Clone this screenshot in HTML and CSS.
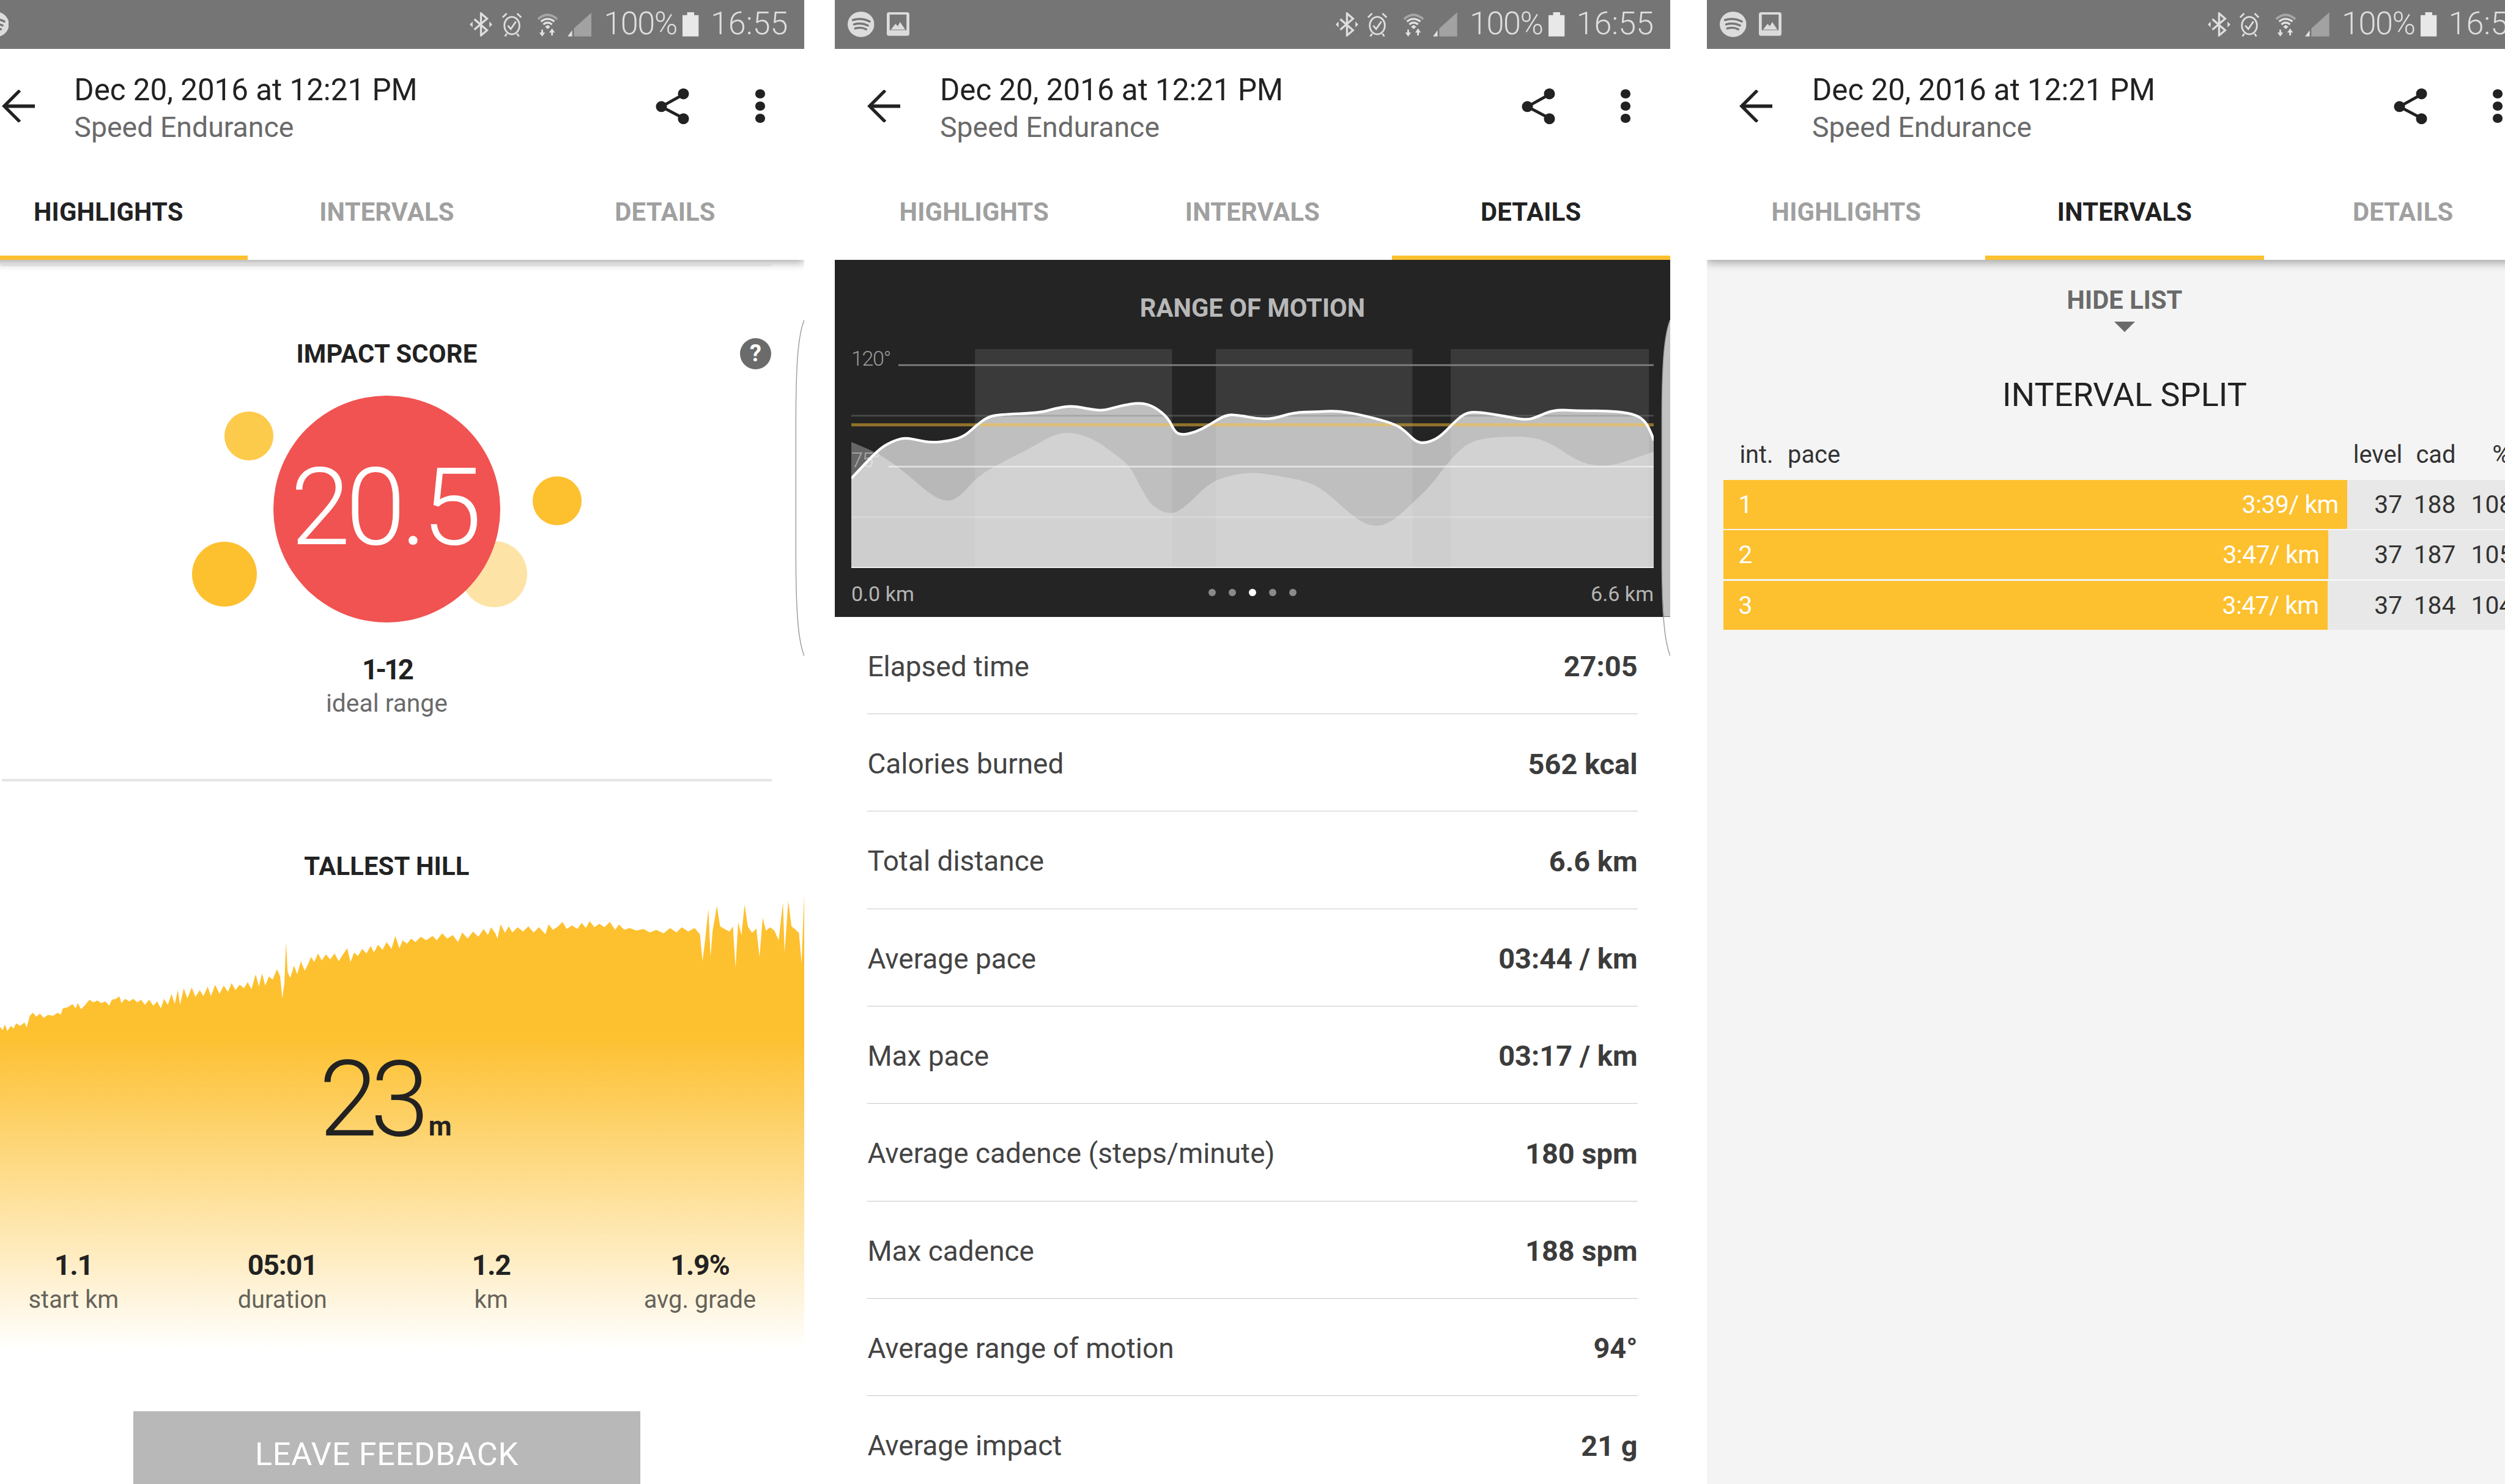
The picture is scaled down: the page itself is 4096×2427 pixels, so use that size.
FILE: index.html
```html
<!DOCTYPE html>
<html lang="en">
<head>
<meta charset="utf-8">
<title>Workout summary</title>
<link rel="stylesheet" href="styles.css">
</head>
<body>
<svg class="defs" aria-hidden="true">
  <symbol id="i-spotify" viewBox="0 0 46 44">
    <ellipse cx="23" cy="22" rx="23" ry="22" fill="#dcdcdc"/>
    <path d="M9 14.5Q24 10 38 17M11 22Q24 18.500 35 24M13 29Q24 26 32 30.500" fill="none" stroke="#757575" stroke-width="3.600" stroke-linecap="round"/>
  </symbol>
  <symbol id="i-image" viewBox="0 0 39 41">
    <rect width="39" height="41" rx="4" fill="#dcdcdc"/>
    <rect x="5" y="4" width="29" height="27" fill="#757575"/>
    <path d="M7 30L15 20L19 24L23 17L32 30Z" fill="#dcdcdc"/>
  </symbol>
  <symbol id="i-bt" viewBox="0 0 39 42">
    <path d="M8 12L30 31L19.500 40V2L30 11L8 30" fill="none" stroke="#dedede" stroke-width="3.500"/>
    <path d="M0 21L5 16V26ZM39 21L34 16V26Z" fill="#dedede"/>
  </symbol>
  <symbol id="i-alarm" viewBox="0 0 36 42">
    <ellipse cx="18" cy="23" rx="13" ry="15" fill="none" stroke="#dedede" stroke-width="3"/>
    <path d="M11 23L16 29L25 16" fill="none" stroke="#dedede" stroke-width="3"/>
    <path d="M2 9L9 2M34 9L27 2M9 37L6 42M27 37L30 42" fill="none" stroke="#dedede" stroke-width="3"/>
  </symbol>
  <symbol id="i-wifi" viewBox="0 0 37 42">
    <path d="M2 12Q18 -3 35 12" fill="none" stroke="#a6a6a6" stroke-width="4"/>
    <path d="M7 16Q18 7 30 16M11 21Q18 15 26 21" fill="none" stroke="#e2e2e2" stroke-width="3.500"/>
    <path d="M14 25L18.500 22L23 25L18.500 29Z" fill="#e2e2e2"/>
    <path d="M9 30V40M26 40V30" fill="none" stroke="#e2e2e2" stroke-width="3"/>
    <path d="M4 35H14L9 42ZM21 35H31L26 28Z" fill="#e2e2e2"/>
  </symbol>
  <symbol id="i-signal" viewBox="0 0 42 42">
    <path d="M42 0V42H11V28Z" fill="#a2a2a2"/>
    <path d="M0 42L8 31V42Z" fill="#e2e2e2"/>
  </symbol>
  <symbol id="i-battery" viewBox="0 0 28 42">
    <path d="M8 0H20V5H28V42H0V5H8Z" fill="#e8e8e8"/>
  </symbol>
  <symbol id="i-back" viewBox="0 0 57 56">
    <path d="M57 28H6" fill="none" stroke="#222" stroke-width="6"/>
    <path d="M31 1L4 28L31 55" fill="none" stroke="#222" stroke-width="5.500"/>
  </symbol>
  <symbol id="i-share" viewBox="0 0 58 63">
    <path d="M48 11L10 32L48 52" fill="none" stroke="#222" stroke-width="5"/>
    <circle cx="48" cy="10" r="9.500" fill="#222"/>
    <circle cx="10" cy="32" r="9.500" fill="#222"/>
    <circle cx="48" cy="53" r="9.500" fill="#222"/>
  </symbol>
</svg>

<main class="screens">

  <section class="phone phone-first">
    <header class="head head-shadow">
      <div class="status">
        <svg class="ic-spotify"><use href="#i-spotify"/></svg>
        <div class="status-right">
          <svg class="ic-bt"><use href="#i-bt"/></svg>
          <svg class="ic-alarm"><use href="#i-alarm"/></svg>
          <svg class="ic-wifi"><use href="#i-wifi"/></svg>
          <svg class="ic-signal"><use href="#i-signal"/></svg>
          <span class="pct">100%</span>
          <svg class="ic-battery"><use href="#i-battery"/></svg>
          <span class="clock">16:55</span>
        </div>
      </div>
      <div class="appbar">
        <svg class="ic-back"><use href="#i-back"/></svg>
        <div class="titles">
          <div class="title">Dec 20, 2016 at 12:21 PM</div>
          <div class="subtitle">Speed Endurance</div>
        </div>
        <svg class="ic-share"><use href="#i-share"/></svg>
        <div class="kebab"><i></i><i></i><i></i></div>
      </div>
      <nav class="tabs">
        <div class="tab active">HIGHLIGHTS</div>
        <div class="tab">INTERVALS</div>
        <div class="tab">DETAILS</div>
      </nav>
    </header>

    <div class="tab-line"></div>

    <section class="impact">
      <h2 class="heading">IMPACT SCORE</h2>
      <div class="help">?</div>
      <div class="bubbles">
        <span class="bubble b1"></span>
        <span class="bubble b2"></span>
        <span class="bubble b3"></span>
        <span class="bubble b4"></span>
        <div class="score">20.5</div>
      </div>
      <div class="range">1-12</div>
      <div class="range-label">ideal range</div>
    </section>
    <div class="divider"></div>

    <section class="hill">
      <svg class="hill-chart" viewBox="0 0 1510 1270" preserveAspectRatio="none" aria-hidden="true">
        <defs>
          <linearGradient id="hillfade" gradientUnits="userSpaceOnUse" x1="0" y1="540" x2="0" y2="1260">
            <stop offset="0" stop-color="#fdc02f"/>
            <stop offset="1" stop-color="#fdc02f" stop-opacity="0"/>
          </linearGradient>
        </defs>
        <path fill="url(#hillfade)" d="M0 520L5 528 9 515 14 530 20 518 26 524 30 512 38 518 46 510 50 522 56 495 62 488 68 497 75 490 82 500 90 493 100 495 108 488 114 492 118 478 128 475 136 468 142 478 146 466 152 480 160 470 168 458 175 464 183 460 190 466 198 462 205 472 210 458 218 456 224 450 228 466 235 456 243 462 250 456 258 464 265 458 272 470 280 458 288 472 295 462 302 478 308 456 315 470 322 445 328 468 334 436 338 470 345 432 352 455 360 430 367 452 375 436 382 450 390 428 396 450 404 424 412 445 420 426 428 440 435 420 442 436 450 424 458 432 465 418 472 434 480 400 486 428 492 398 498 426 505 405 512 412 520 388 526 405 530 455 534 420 537 325 540 395 545 408 552 380 558 400 565 370 572 392 578 378 584 360 590 372 597 352 604 368 612 354 620 366 628 352 636 370 644 354 652 340 658 372 665 350 672 358 680 342 688 352 696 335 702 350 710 332 718 344 726 326 735 342 742 312 750 340 756 322 764 330 772 318 780 326 790 314 800 322 812 312 820 322 830 306 840 318 850 310 860 326 868 304 878 318 888 302 898 314 908 296 916 310 922 292 930 306 934 318 940 285 948 305 955 290 962 304 972 292 982 302 992 290 1002 304 1012 292 1024 308 1030 285 1038 298 1048 290 1056 280 1064 296 1074 288 1084 296 1092 282 1100 294 1107 278 1116 292 1125 284 1135 292 1145 280 1155 298 1162 286 1172 298 1182 294 1195 300 1208 296 1220 304 1232 298 1246 306 1258 294 1270 304 1280 292 1292 302 1304 294 1314 308 1319 370 1324 320 1330 250 1334 360 1338 300 1346 243 1352 290 1360 296 1370 302 1376 290 1381 385 1386 280 1392 310 1398 240 1404 290 1412 305 1420 295 1426 360 1432 270 1438 300 1446 292 1454 300 1462 322 1470 235 1473 350 1480 232 1486 290 1494 298 1500 305 1505 375 1510 213V1270H0Z"/>
      </svg>
      <div class="hill-content">
        <h2 class="heading">TALLEST HILL</h2>
        <div class="hill-value"><span class="hill-num">23</span><span class="hill-unit">m</span></div>
        <div class="stats">
          <div class="stat"><div class="stat-val">1.1</div><div class="stat-lab">start km</div></div>
          <div class="stat"><div class="stat-val">05:01</div><div class="stat-lab">duration</div></div>
          <div class="stat"><div class="stat-val">1.2</div><div class="stat-lab">km</div></div>
          <div class="stat"><div class="stat-val">1.9%</div><div class="stat-lab">avg. grade</div></div>
        </div>
        <div class="feedback">LEAVE FEEDBACK</div>
      </div>
    </section>

    <svg class="edge" viewBox="0 0 17 580" preserveAspectRatio="none" aria-hidden="true">
      <path d="M17 0C7 25 3 70 2.500 160V420C3 510 7 555 17 580" fill="none" stroke="#9c9c9c" stroke-width="1.500"/>
    </svg>
  </section>

  <section class="phone phone-second">
    <header class="head">
      <div class="status">
        <svg class="ic-spotify"><use href="#i-spotify"/></svg>
        <svg class="ic-image"><use href="#i-image"/></svg>
        <div class="status-right">
          <svg class="ic-bt"><use href="#i-bt"/></svg>
          <svg class="ic-alarm"><use href="#i-alarm"/></svg>
          <svg class="ic-wifi"><use href="#i-wifi"/></svg>
          <svg class="ic-signal"><use href="#i-signal"/></svg>
          <span class="pct">100%</span>
          <svg class="ic-battery"><use href="#i-battery"/></svg>
          <span class="clock">16:55</span>
        </div>
      </div>
      <div class="appbar">
        <svg class="ic-back"><use href="#i-back"/></svg>
        <div class="titles">
          <div class="title">Dec 20, 2016 at 12:21 PM</div>
          <div class="subtitle">Speed Endurance</div>
        </div>
        <svg class="ic-share"><use href="#i-share"/></svg>
        <div class="kebab"><i></i><i></i><i></i></div>
      </div>
      <nav class="tabs">
        <div class="tab">HIGHLIGHTS</div>
        <div class="tab">INTERVALS</div>
        <div class="tab active">DETAILS</div>
      </nav>
    </header>

    <section class="rom">
      <h2 class="rom-title">RANGE OF MOTION</h2>
      <div class="rom-chart">
        <svg class="rom-svg" viewBox="51 355 1466 780" preserveAspectRatio="none" aria-hidden="true">
          <rect class="band" x="277" y="355" width="360" height="780"/>
          <rect class="band" x="717" y="355" width="359" height="780"/>
          <rect class="band" x="1146" y="355" width="362" height="780"/>
          <path class="area-two" d="M51 685L78 707.500Q105 730 127.500 762.500Q150 795 175 837.500Q200 880 215 890Q230 900 242.500 885Q255 870 267.500 840Q280 810 300 787.500Q320 765 350 735Q380 705 400 682.500Q420 660 435 655Q450 650 470 660Q490 670 510 697.500Q530 725 545 747.500Q560 770 570 810Q580 850 590 882.500Q600 915 617.500 931Q635 947 650 928.500Q665 910 682.500 875Q700 840 715 825Q730 810 755 801Q780 792 805 798.500Q830 805 855 815Q880 825 895 837.500Q910 850 930 885Q950 920 967.500 947.500Q985 975 1000 981.500Q1015 988 1030 974Q1045 960 1060 932.500Q1075 905 1092.500 872.500Q1110 840 1125 800Q1140 760 1157.500 725Q1175 690 1195 679Q1215 668 1252.500 666.500Q1290 665 1310 677.500Q1330 690 1350 717.500Q1370 745 1387.500 757.500Q1405 770 1422.500 770Q1440 770 1460 757.500Q1480 745 1517 720V1135H51Z"/>
          <path class="area-one" d="M51 815Q75 765 90 735Q105 705 117.500 692.500Q130 680 140 675Q150 670 162.500 675Q175 680 186 684Q197 688 213.500 685Q230 682 244 673.500Q258 665 269 645Q280 625 290 611Q300 597 310 592.500Q320 588 357.500 585Q395 582 410 573.500Q425 565 440 560.500Q455 556 472.500 563Q490 570 501 572Q512 574 528.500 564.500Q545 555 562.500 550Q580 545 592.500 552.500Q605 560 617.500 580Q630 600 636 625Q642 650 648.500 655.500Q655 661 667.500 655.500Q680 650 692.500 637.500Q705 625 720 606.500Q735 588 747.500 589Q760 590 775 596Q790 602 805 603Q820 604 840 592Q860 580 880 579Q900 578 920 576Q940 574 965 583Q990 592 1017.500 607Q1045 622 1055 636Q1065 650 1073.500 667.500Q1082 685 1091 687.500Q1100 690 1112.500 680Q1125 670 1137.500 645Q1150 620 1160 602.500Q1170 585 1180 581Q1190 577 1215 584.500Q1240 592 1262.500 600Q1285 608 1295 601.500Q1305 595 1320 582.500Q1335 570 1357.500 572.500Q1380 575 1405 574.500Q1430 574 1450 578Q1470 582 1482.500 590Q1495 598 1502.500 619Q1510 640 1517 680V1135H51Z"/>
          <path class="ln ln-top" d="M137 412H1517"/>
          <path class="ln ln-faint" d="M51 592H1517"/>
          <path class="ln-yellow" d="M51 619H1517V630H51Z"/>
          <path class="ln ln-mid" d="M119 773H1517"/>
          <path class="ln ln-low" d="M51 953H1517"/>
          <path class="ln ln-base" d="M51 1133H1517"/>
          <path class="curve" d="M51 815Q75 765 90 735Q105 705 117.500 692.500Q130 680 140 675Q150 670 162.500 675Q175 680 186 684Q197 688 213.500 685Q230 682 244 673.500Q258 665 269 645Q280 625 290 611Q300 597 310 592.500Q320 588 357.500 585Q395 582 410 573.500Q425 565 440 560.500Q455 556 472.500 563Q490 570 501 572Q512 574 528.500 564.500Q545 555 562.500 550Q580 545 592.500 552.500Q605 560 617.500 580Q630 600 636 625Q642 650 648.500 655.500Q655 661 667.500 655.500Q680 650 692.500 637.500Q705 625 720 606.500Q735 588 747.500 589Q760 590 775 596Q790 602 805 603Q820 604 840 592Q860 580 880 579Q900 578 920 576Q940 574 965 583Q990 592 1017.500 607Q1045 622 1055 636Q1065 650 1073.500 667.500Q1082 685 1091 687.500Q1100 690 1112.500 680Q1125 670 1137.500 645Q1150 620 1160 602.500Q1170 585 1180 581Q1190 577 1215 584.500Q1240 592 1262.500 600Q1285 608 1295 601.500Q1305 595 1320 582.500Q1335 570 1357.500 572.500Q1380 575 1405 574.500Q1430 574 1450 578Q1470 582 1482.500 590Q1495 598 1502.500 619Q1510 640 1517 680"/>
        </svg>
        <span class="rom-label rom-120">120°</span>
        <span class="rom-label rom-75">75°</span>
      </div>
      <div class="rom-foot">
        <span>0.0 km</span>
        <div class="pager"><i></i><i></i><i class="on"></i><i></i><i></i></div>
        <span>6.6 km</span>
      </div>
    </section>

    <section class="details">
      <div class="row"><span class="row-l">Elapsed time</span><span class="row-v">27:05</span></div>
      <div class="row"><span class="row-l">Calories burned</span><span class="row-v">562 kcal</span></div>
      <div class="row"><span class="row-l">Total distance</span><span class="row-v">6.6 km</span></div>
      <div class="row"><span class="row-l">Average pace</span><span class="row-v">03:44 / km</span></div>
      <div class="row"><span class="row-l">Max pace</span><span class="row-v">03:17 / km</span></div>
      <div class="row"><span class="row-l">Average cadence (steps/minute)</span><span class="row-v">180 spm</span></div>
      <div class="row"><span class="row-l">Max cadence</span><span class="row-v">188 spm</span></div>
      <div class="row"><span class="row-l">Average range of motion</span><span class="row-v">94°</span></div>
      <div class="row"><span class="row-l">Average impact</span><span class="row-v">21 g</span></div>
    </section>

    <svg class="edge" viewBox="0 0 17 580" preserveAspectRatio="none" aria-hidden="true">
      <path d="M17 0C7 25 3 70 2.500 160V420C3 470 5 495 6 512H17Z" fill="#c2c2c2"/>
      <path d="M17 0C7 25 3 70 2.500 160V420C3 510 7 555 17 580" fill="none" stroke="#9c9c9c" stroke-width="1.500"/>
    </svg>
  </section>

  <section class="phone phone-third">
    <header class="head head-shadow">
      <div class="status">
        <svg class="ic-spotify"><use href="#i-spotify"/></svg>
        <svg class="ic-image"><use href="#i-image"/></svg>
        <div class="status-right">
          <svg class="ic-bt"><use href="#i-bt"/></svg>
          <svg class="ic-alarm"><use href="#i-alarm"/></svg>
          <svg class="ic-wifi"><use href="#i-wifi"/></svg>
          <svg class="ic-signal"><use href="#i-signal"/></svg>
          <span class="pct">100%</span>
          <svg class="ic-battery"><use href="#i-battery"/></svg>
          <span class="clock">16:55</span>
        </div>
      </div>
      <div class="appbar">
        <svg class="ic-back"><use href="#i-back"/></svg>
        <div class="titles">
          <div class="title">Dec 20, 2016 at 12:21 PM</div>
          <div class="subtitle">Speed Endurance</div>
        </div>
        <svg class="ic-share"><use href="#i-share"/></svg>
        <div class="kebab"><i></i><i></i><i></i></div>
      </div>
      <nav class="tabs">
        <div class="tab">HIGHLIGHTS</div>
        <div class="tab active">INTERVALS</div>
        <div class="tab">DETAILS</div>
      </nav>
    </header>

    <section class="intervals">
      <div class="hide-list">HIDE LIST</div>
      <div class="hide-arrow"></div>
      <h2 class="split-title">INTERVAL SPLIT</h2>
      <div class="split-head">
        <span class="col-int">int.</span>
        <span class="col-pace">pace</span>
        <span class="col-num col-lvl">level</span>
        <span class="col-num col-cad">cad</span>
        <span class="col-num col-pct col-pct-head">%</span>
      </div>
      <div class="split-rows">
        <div class="split-row">
          <div class="split-bar" style="width:1076px"><span>1</span><span>3:39/ km</span></div>
          <span class="col-num col-lvl">37</span><span class="col-num col-cad">188</span><span class="col-num col-pct">108</span>
        </div>
        <div class="split-row">
          <div class="split-bar" style="width:1043px"><span>2</span><span>3:47/ km</span></div>
          <span class="col-num col-lvl">37</span><span class="col-num col-cad">187</span><span class="col-num col-pct">105</span>
        </div>
        <div class="split-row">
          <div class="split-bar" style="width:1042px"><span>3</span><span>3:47/ km</span></div>
          <span class="col-num col-lvl">37</span><span class="col-num col-cad">184</span><span class="col-num col-pct">104</span>
        </div>
      </div>
    </section>
  </section>

</main>
</body>
</html>
```

FILE: styles.css
```css
* { box-sizing: border-box; }
html, body { margin: 0; padding: 0; background: #fff; overflow: hidden; }
body { font-family: Roboto, "Liberation Sans", sans-serif; color: #222; }
h2 { margin: 0; font: inherit; }
.defs { position: absolute; width: 0; height: 0; }

.screens { zoom: 0.948148; display: flex; width: 4320px; height: 2560px; overflow: hidden; background: #fff; }
.phone { position: relative; flex: 0 0 1440px; width: 1440px; height: 2560px; overflow: hidden; display: flex; flex-direction: column; background: #fff; }
.phone-first { margin-left: -53px; }
.phone-second { margin-left: 53px; }
.phone-third { margin-left: 64px; background: #f4f4f4; }

/* status bar */
.head { position: relative; z-index: 2; flex: 0 0 448px; background: #fff; }
.head-shadow { box-shadow: 0 5px 14px rgba(0,0,0,.32); }
.status { height: 84px; background: #757575; display: flex; align-items: center; padding: 0 28px 0 22px; }
.status-right { margin-left: auto; display: flex; align-items: center; }
.ic-spotify { width: 46px; height: 44px; }
.ic-image { width: 39px; height: 41px; margin-left: 21px; }
.ic-bt { width: 39px; height: 42px; margin-right: 15px; }
.ic-alarm { width: 36px; height: 42px; margin-right: 26px; }
.ic-wifi { width: 37px; height: 42px; margin-right: 15px; }
.ic-signal { width: 42px; height: 42px; margin-right: 21px; }
.ic-battery { width: 28px; height: 42px; margin: 0 20px 0 10px; }
.pct, .clock { font-size: 55px; line-height: 60px; font-weight: 300; color: #dedede; }
.pct { letter-spacing: -1.500px; }

/* app bar */
.appbar { height: 198px; display: flex; align-items: center; padding: 0 68px 0 56px; }
.ic-back { width: 57px; height: 56px; margin-right: 68px; }
.titles { padding-top: 10px; }
.title { font-size: 52px; line-height: 64px; color: #222; }
.subtitle { font-size: 49px; line-height: 66px; color: #6a6a6a; }
.ic-share { width: 58px; height: 63px; margin-left: auto; margin-right: 113px; }
.kebab { display: flex; flex-direction: column; gap: 6px; }
.kebab i { display: block; width: 17px; height: 15px; border-radius: 50%; background: #222; }

/* tabs */
.tabs { height: 166px; display: flex; }
.tab { position: relative; flex: 1; display: flex; align-items: center; justify-content: center; font-size: 44px; font-weight: 700; color: #a0a0a0; letter-spacing: .2px; }
.tab.active { color: #222; }
.tab.active::after { content: ""; position: absolute; left: 0; right: 0; bottom: 0; height: 7px; background: #fdc02f; }
.tab-line { position: absolute; z-index: 3; left: 56px; width: 1328px; top: 455px; height: 4px; background: #dcdcdc; }

/* impact */
.impact { position: relative; flex: none; display: flex; flex-direction: column; align-items: center; padding-top: 137px; height: 896px; }
.heading { font-size: 44px; line-height: 50px; font-weight: 700; color: #222; text-align: center; letter-spacing: .2px; }
.help { position: absolute; top: 135px; left: 1329px; width: 54px; height: 54px; border-radius: 50%; background: #6b6b6b; color: #fff; font-size: 40px; font-weight: 700; line-height: 54px; text-align: center; }
.bubbles { position: relative; width: 392px; height: 392px; margin-top: 47px; }
.bubble { position: absolute; border-radius: 50%; background: #fdc02f; }
.b1 { width: 84px; height: 84px; left: -84px; top: 28px; background: #fdcb4b; }
.b2 { width: 84px; height: 84px; left: 448px; top: 140px; }
.b3 { width: 112px; height: 112px; left: -140px; top: 252px; }
.b4 { width: 114px; height: 114px; left: 324px; top: 251px; background: #fde3a6; }
.score { position: absolute; inset: 0; border-radius: 50%; background: #f05351; color: #fff; font-size: 186px; font-weight: 300; letter-spacing: -8px; line-height: 386px; text-align: center; text-indent: -10px; }
.range { margin-top: 54px; font-size: 48px; line-height: 56px; font-weight: 700; letter-spacing: -4px; color: #222; }
.range-label { margin-top: 5px; font-size: 43px; line-height: 50px; color: #6a6a6a; }
.divider { flex: 0 0 4px; margin: 0 56px; background: #e5e5e5; }

/* hill */
.hill { position: relative; flex: none; }
.hill-chart { position: absolute; left: 53px; top: 32px; width: 1387px; height: 956px; }
.hill-content { position: relative; display: flex; flex-direction: column; align-items: center; padding-top: 121px; }
.hill-value { margin-top: 286px; display: flex; align-items: baseline; height: 183px; }
.hill-num { font-size: 183px; line-height: 183px; font-weight: 300; letter-spacing: -13px; color: #222; margin-left: -5px; }
.hill-unit { font-size: 46px; font-weight: 700; color: #222; margin-left: 12px; }
.stats { display: flex; width: 1440px; margin-top: 167px; }
.stat { flex: 1; text-align: center; }
.stat-val { font-size: 49px; line-height: 56px; font-weight: 700; color: #222; letter-spacing: -1.200px; }
.stat-lab { margin-top: 6px; font-size: 42px; line-height: 50px; color: #66635a; }
.feedback { width: 875px; height: 160px; margin-top: 167px; background: #b8b8b8; color: #fff; font-size: 55px; font-weight: 400; letter-spacing: .8px; text-align: center; line-height: 150px; }

/* edge */
.edge { position: absolute; z-index: 4; right: 0; top: 552px; width: 17px; height: 580px; }

/* range of motion */
.rom { flex: 0 0 616px; background: #242424; padding: 58px 28px 0; display: flex; flex-direction: column; }
.rom-title { font-size: 44px; line-height: 50px; font-weight: 700; color: #b8b8b8; text-align: center; }
.rom-chart { position: relative; margin-top: 46px; height: 378px; }
.rom-svg { display: block; width: 1384px; height: 378px; }
.band { fill: rgba(255,255,255,.1); }
.area-two { fill: rgba(255,255,255,.3); }
.area-one { fill: rgba(255,255,255,.68); }
.ln { fill: none; stroke-width: 3px; vector-effect: non-scaling-stroke; }
.ln-top { stroke: #808080; }
.ln-faint { stroke: rgba(130,130,130,.4); }
.ln-yellow { fill: rgba(253,192,47,.5); }
.ln-mid { stroke: rgba(240,240,240,.75); }
.ln-low { stroke: rgba(255,255,255,.2); }
.ln-base { stroke: #eee; }
.curve { fill: none; stroke: #fff; stroke-width: 4.500px; vector-effect: non-scaling-stroke; }
.rom-label { position: absolute; left: 0; font-size: 36px; line-height: 44px; font-weight: 300; letter-spacing: -1.500px; }
.rom-120 { top: -5px; color: #9a9a9a; }
.rom-75 { top: 170px; color: rgba(255,255,255,.45); }
.rom-foot { margin-top: 23px; display: flex; justify-content: space-between; align-items: center; font-size: 36px; line-height: 44px; color: #b4b4b4; }
.pager { display: flex; gap: 22px; margin-bottom: 6px; }
.pager i { display: block; width: 13px; height: 13px; border-radius: 50%; background: #8a8a8a; }
.pager i.on { background: #fff; }

/* details */
.details { flex: 1; padding: 0 56px; }
.row { height: 168px; padding-top: 4px; display: flex; justify-content: space-between; align-items: center; border-bottom: 2px solid #c8c8c8; font-size: 48.500px; color: #444; }
.row-v { font-size: 49.500px; font-weight: 700; color: #3c3c3c; }

/* intervals */
.intervals { flex: 1; background: #f4f4f4; padding-top: 45px; display: flex; flex-direction: column; align-items: center; }
.hide-list { font-size: 44px; line-height: 50px; font-weight: 700; color: #6a6a6a; }
.hide-arrow { margin-top: 12px; width: 0; height: 0; border-left: 18px solid transparent; border-right: 18px solid transparent; border-top: 18px solid #6a6a6a; }
.split-title { margin-top: 77px; font-size: 57px; line-height: 64px; color: #222; }
.split-head { align-self: stretch; display: flex; margin: 45px 28px 19px; font-size: 42px; line-height: 50px; color: #333; padding-right: 22px; }
.col-int { width: 111px; padding-left: 28px; }
.col-pace { flex: 1; }
.col-num { text-align: right; flex: none; }
.col-lvl { width: 100px; }
.col-cad { width: 92px; }
.col-pct { width: 99px; }
.col-pct-head { padding-right: 5px; }
.split-rows { align-self: stretch; margin: 0 28px; display: flex; flex-direction: column; gap: 3px; }
.split-row { position: relative; height: 84px; background: #e8e8e8; display: flex; justify-content: flex-end; align-items: center; padding-right: 22px; font-size: 43px; color: #333; }
.split-bar { position: absolute; left: 0; top: 0; bottom: 0; background: #fdc02f; color: #fff; display: flex; justify-content: space-between; align-items: center; padding: 0 15px 0 26px; letter-spacing: -.5px; }
```
